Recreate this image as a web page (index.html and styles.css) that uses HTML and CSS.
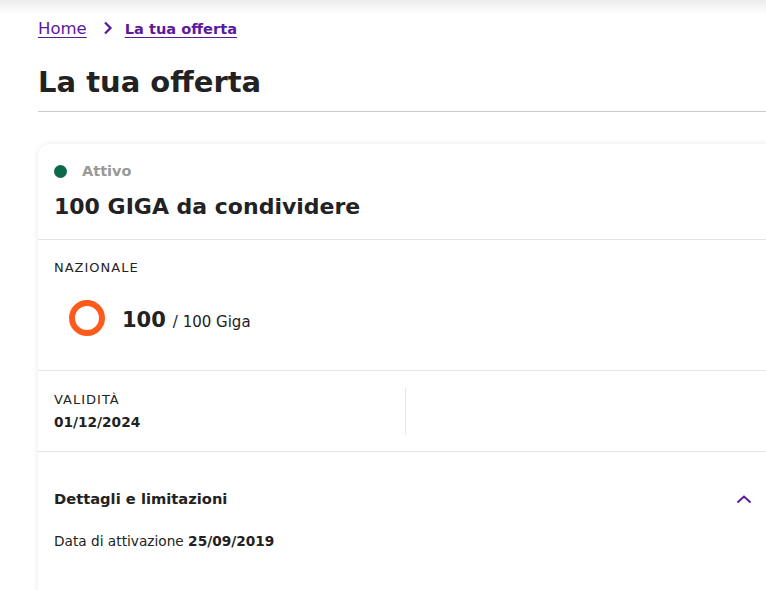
FILE: index.html
```html
<!DOCTYPE html>
<html lang="it">
<head>
<meta charset="utf-8">
<title>La tua offerta</title>
<link rel="stylesheet" href="styles.css">
</head>
<body>
<div class="topshade"></div>
<main class="page">
  <nav class="crumbs">
    <a class="crumb" href="#">Home</a>
    <svg class="crumb-sep" width="12" height="14" viewBox="0 0 12 14"><path d="M3 1.5 L8.5 7 L3 12.5" fill="none" stroke="#5b1a9e" stroke-width="2.2"/></svg>
    <a class="crumb current" href="#">La tua offerta</a>
  </nav>
  <h1 class="title">La tua offerta</h1>
  <section class="card">
    <div class="card-head">
      <div class="status"><span class="dot"></span><span class="status-text">Attivo</span></div>
      <h2 class="offer-name">100 GIGA da condividere</h2>
    </div>
    <div class="section usage">
      <div class="label">NAZIONALE</div>
      <div class="usage-row">
        <svg class="ring" width="38" height="38" viewBox="0 0 38 38"><circle cx="19" cy="19" r="15" fill="none" stroke="#ff5a1e" stroke-width="6"/></svg>
        <span class="usage-text"><span class="amount">100</span><span class="total">/ 100 Giga</span></span>
      </div>
    </div>
    <div class="section validity">
      <div class="val-col">
        <div class="label">VALIDITÀ</div>
        <div class="val-date">01/12/2024</div>
      </div>
      <div class="val-col empty"></div>
    </div>
    <div class="section details">
      <div class="details-head">
        <span class="details-title">Dettagli e limitazioni</span>
        <svg class="chev-up" width="16" height="10" viewBox="0 0 16 10"><path d="M1.5 8.5 L8 2.5 L14.5 8.5" fill="none" stroke="#5b1a9e" stroke-width="2"/></svg>
      </div>
      <p class="act">Data di attivazione <b>25/09/2019</b></p>
    </div>
  </section>
</main>
</body>
</html>
```
FILE: styles.css
```css
html, body { margin: 0; padding: 0; background: #fff; overflow: hidden; }
body { font-family: "DejaVu Sans", Inter, sans-serif; color: #222; width: 766px; height: 590px; }
.topshade { height: 14px; background: linear-gradient(#ececec, #fff); }
.page { padding-left: 38px; width: 760px; }
.crumbs { display: flex; align-items: center; height: 28px; }
.crumb { color: #5b1a9e; font-size: 16.5px; text-decoration: underline; text-underline-offset: 3px; }
.crumb.current { font-weight: 700; font-size: 14.6px; }
.crumb-sep { margin: 0 11px 0 15px; }
.title { font-size: 29px; font-weight: 700; margin: 22px 0 0; line-height: 36px; padding-bottom: 11px; border-bottom: 1px solid #c9c9c9; }
.card { margin-top: 32px; border-radius: 12px; box-shadow: 0 0 6px rgba(0,0,0,0.09); background: #fff; height: 460px; }
.card-head { padding: 17px 16px 17px; border-bottom: 1px solid #e6e6e6; }
.status { display: flex; align-items: center; height: 20px; }
.dot { width: 13px; height: 13px; border-radius: 50%; background: #0c6a4a; margin-left: 0; }
.status-text { color: #999; font-weight: 700; font-size: 14.5px; margin-left: 15px; }
.offer-name { margin: 11px 0 0; font-size: 22px; font-weight: 700; line-height: 30px; }
.section { border-bottom: 1px solid #e6e6e6; }
.usage { padding: 20px 16px 0; box-sizing: border-box; height: 131px; }
.label { font-size: 13px; letter-spacing: 1px; color: #222; }
.usage-row { display: flex; align-items: center; margin-top: 24px; margin-left: 14px; }
.ring { margin-right: 16px; }
.usage-text { display: flex; align-items: baseline; padding-top: 3px; }
.amount { font-size: 21px; font-weight: 700; margin-right: 7px; }
.total { font-size: 15px; }
.validity { display: flex; height: 81px; box-sizing: border-box; padding: 17px 0 16px; }
.val-col { width: 351px; padding-left: 16px; border-right: 1px solid #e6e6e6; }
.val-col.empty { border-right: none; }
.validity .label { margin-top: 4px; }
.val-date { font-size: 13.7px; font-weight: 700; margin-top: 7px; }
.details { border-bottom: none; padding: 38px 16px 0; }
.details-head { display: flex; align-items: center; justify-content: space-between; width: 698px; }
.details-title { font-weight: 700; font-size: 14.7px; }
.act { font-size: 13.7px; margin: 26px 0 0; }
.act b { font-weight: 700; }
```
